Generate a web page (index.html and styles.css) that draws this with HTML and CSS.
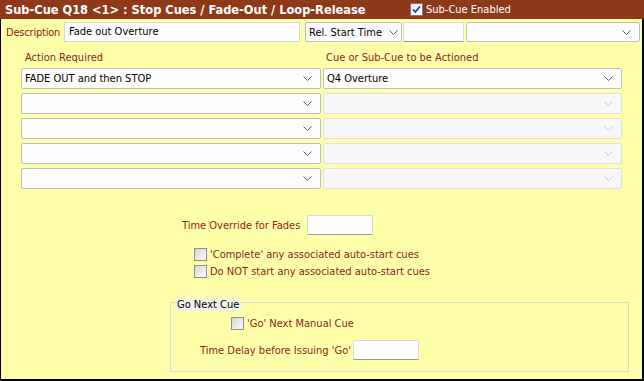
FILE: index.html
```html
<!DOCTYPE html>
<html lang="en">
<head>
  <meta charset="UTF-8" />
  <title>Sub-Cue Q18</title>
  <link rel="stylesheet" href="styles.css">
</head>
<body>

<div class="titlebar">
  <span class="title">Sub-Cue Q18 &lt;1&gt; : Stop Cues / Fade-Out / Loop-Release</span>
  <label class="check light">
    <span class="box on">
      <svg width="11" height="11" viewBox="0 0 11 11"><path d="M2 5.5 L4.3 8 L9 2.5" fill="none" stroke="#21468f" stroke-width="1.8"/></svg>
    </span>
    Sub-Cue Enabled
  </label>
</div>

<div class="content">

  <div class="descRow">
    <span class="lbl descLbl">Description</span>
    <div class="textbox descBox">Fade out Overture</div>
    <div class="select relSel"><span>Rel. Start Time</span><svg class="chev" width="9" height="5" viewBox="0 0 9 5"><path d="M0.5 0.5 L4.5 4.5 L8.5 0.5" fill="none" stroke="#606060"/></svg></div>
    <div class="textbox relTime"></div>
    <div class="select relCue"><span></span><svg class="chev" width="9" height="5" viewBox="0 0 9 5"><path d="M0.5 0.5 L4.5 4.5 L8.5 0.5" fill="none" stroke="#606060"/></svg></div>
  </div>

  <div class="heads">
    <span class="lbl">Action Required</span>
    <span class="lbl">Cue or Sub-Cue to be Actioned</span>
  </div>

  <div class="actions">
    <div class="select"><span>FADE OUT and then STOP</span><svg class="chev" width="9" height="5" viewBox="0 0 9 5"><path d="M0.5 0.5 L4.5 4.5 L8.5 0.5" fill="none" stroke="#606060"/></svg></div>
    <div class="select"><span>Q4 Overture</span><svg class="chev" width="9" height="5" viewBox="0 0 9 5"><path d="M0.5 0.5 L4.5 4.5 L8.5 0.5" fill="none" stroke="#606060"/></svg></div>

    <div class="select"><span></span><svg class="chev" width="9" height="5" viewBox="0 0 9 5"><path d="M0.5 0.5 L4.5 4.5 L8.5 0.5" fill="none" stroke="#606060"/></svg></div>
    <div class="select off"><span></span><svg class="chev" width="9" height="5" viewBox="0 0 9 5"><path d="M0.5 0.5 L4.5 4.5 L8.5 0.5" fill="none" stroke="#c8c8c8"/></svg></div>

    <div class="select"><span></span><svg class="chev" width="9" height="5" viewBox="0 0 9 5"><path d="M0.5 0.5 L4.5 4.5 L8.5 0.5" fill="none" stroke="#606060"/></svg></div>
    <div class="select off"><span></span><svg class="chev" width="9" height="5" viewBox="0 0 9 5"><path d="M0.5 0.5 L4.5 4.5 L8.5 0.5" fill="none" stroke="#c8c8c8"/></svg></div>

    <div class="select"><span></span><svg class="chev" width="9" height="5" viewBox="0 0 9 5"><path d="M0.5 0.5 L4.5 4.5 L8.5 0.5" fill="none" stroke="#606060"/></svg></div>
    <div class="select off"><span></span><svg class="chev" width="9" height="5" viewBox="0 0 9 5"><path d="M0.5 0.5 L4.5 4.5 L8.5 0.5" fill="none" stroke="#c8c8c8"/></svg></div>

    <div class="select"><span></span><svg class="chev" width="9" height="5" viewBox="0 0 9 5"><path d="M0.5 0.5 L4.5 4.5 L8.5 0.5" fill="none" stroke="#606060"/></svg></div>
    <div class="select off"><span></span><svg class="chev" width="9" height="5" viewBox="0 0 9 5"><path d="M0.5 0.5 L4.5 4.5 L8.5 0.5" fill="none" stroke="#c8c8c8"/></svg></div>
  </div>

  <div class="fadeRow">
    <span class="lbl fadeLbl">Time Override for Fades</span>
    <div class="textbox small"></div>
  </div>

  <div class="opts">
    <label class="check"><span class="box"></span>'Complete' any associated auto-start cues</label>
    <label class="check"><span class="box"></span>Do NOT start any associated auto-start cues</label>
  </div>

  <div class="group">
    <span class="groupTitle">Go Next Cue</span>
    <label class="check goChk"><span class="box"></span>'Go' Next Manual Cue</label>
    <div class="delayRow">
      <span class="lbl delayLbl">Time Delay before Issuing 'Go'</span>
      <div class="textbox small"></div>
    </div>
  </div>

</div>

</body>
</html>
```

FILE: styles.css
```css
html, body {
  margin: 0;
  padding: 0;
  width: 644px;
  height: 381px;
  overflow: hidden;
  background: #ffffaa;
  font-family: "DejaVu Sans Condensed", "Liberation Sans", sans-serif;
  font-size: 11px;
  color: #000;
}

.titlebar {
  height: 19px;
  background: #8e3a1a;
  color: #fff;
  display: flex;
  align-items: center;
}

.title {
  width: 405px;
  padding-left: 5px;
  font-weight: bold;
  font-size: 12.7px;
  white-space: nowrap;
}

.content {
  box-sizing: border-box;
  height: 362px;
  border-left: 1px solid #000;
  border-right: 2px solid #000;
  border-bottom: 2px solid #000;
  display: flex;
  flex-direction: column;
  align-items: flex-start;
}

.lbl {
  color: #8a2418;
  white-space: nowrap;
}

/* inputs */
.textbox {
  box-sizing: border-box;
  height: 20px;
  background: #fff;
  border: 1px solid #dadada;
  border-bottom-color: #9a9a9a;
  padding: 0 4px;
  line-height: 18px;
  white-space: nowrap;
}

.select {
  box-sizing: border-box;
  height: 21px;
  background: #fdfdfd;
  border: 1px solid #bdbdbd;
  border-radius: 2px;
  display: flex;
  align-items: center;
  justify-content: space-between;
  padding: 0 8px 0 3px;
  white-space: nowrap;
}

.select.off {
  background: #f7f7f7;
  border-color: #e1e1e1;
}

.chev {
  flex: none;
}

/* description row */
.descRow {
  margin-top: 3px;
  height: 20px;
  display: flex;
  align-items: center;
}

.descLbl {
  width: 58px;
  padding-left: 5px;
  letter-spacing: -0.2px;
}

.descBox {
  width: 236px;
  border-color: #d6d6d6;
}

.relSel {
  width: 97px;
  height: 20px;
  margin-left: 5px;
  padding-right: 3px;
}

.relTime {
  width: 61px;
  margin-left: 1px;
}

.relCue {
  width: 174px;
  height: 20px;
  margin-left: 2px;
}

/* action grid */
.heads {
  margin-top: 9px;
  padding-left: 20px;
  display: grid;
  grid-template-columns: 300px 299px;
  column-gap: 2px;
  line-height: 14px;
}

.heads .lbl {
  padding-left: 4px;
}

.heads .lbl + .lbl {
  padding-left: 3px;
}

.actions {
  margin-top: 3px;
  padding-left: 20px;
  display: grid;
  grid-template-columns: 300px 299px;
  column-gap: 2px;
  row-gap: 4px;
}

/* fades */
.fadeRow {
  margin-top: 26px;
  padding-left: 181px;
  display: flex;
  align-items: center;
}

.fadeLbl {
  width: 125px;
}

.small {
  width: 66px;
}

.opts {
  margin-top: 11px;
  padding-left: 193px;
  display: flex;
  flex-direction: column;
}

.check {
  display: flex;
  align-items: center;
  gap: 3px;
  height: 17px;
  color: #8a2418;
  white-space: nowrap;
}

.check.light {
  color: #fff;
  height: 19px;
}

.box {
  box-sizing: border-box;
  width: 13px;
  height: 13px;
  border: 1px solid #8f8f8f;
  background: linear-gradient(135deg, #d4d4d4, #f4f4f4 80%);
  display: flex;
  align-items: center;
  justify-content: center;
}

.box.on {
  background: linear-gradient(135deg, #e6e6e6, #ffffff);
  border-color: #6f7a8a;
}

/* go next group */
.group {
  box-sizing: border-box;
  width: 459px;
  margin-top: 22px;
  margin-left: 169px;
  border: 1px solid #d8d8d0;
  padding-bottom: 11px;
  display: flex;
  flex-direction: column;
  align-items: flex-start;
}

.groupTitle {
  margin: -5px 0 0 5px;
  padding: 0 2px 0 1px;
  line-height: 13px;
  background: #f2f2ea;
  color: #000;
}

.goChk {
  margin-top: 5px;
  margin-left: 60px;
  height: 15px;
}

.delayRow {
  margin-top: 9px;
  padding-left: 29px;
  display: flex;
  align-items: center;
}

.delayLbl {
  width: 153px;
}
```
